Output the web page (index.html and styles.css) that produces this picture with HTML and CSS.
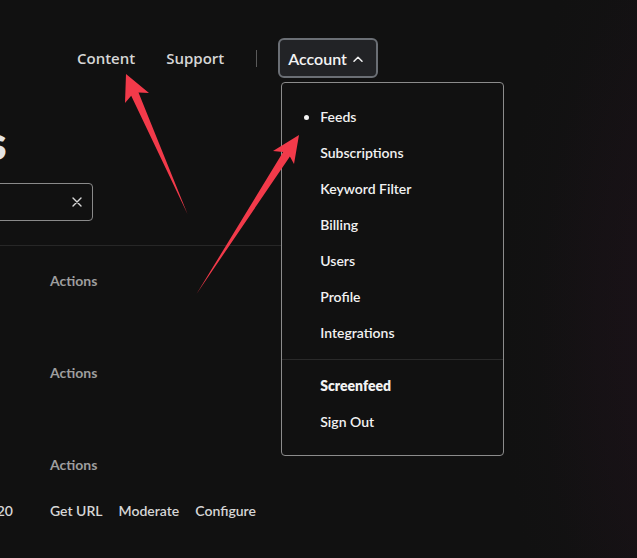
FILE: index.html
```html
<!DOCTYPE html>
<html lang="en">
<head>
<meta charset="utf-8">
<title>Feeds</title>
<link rel="stylesheet" href="styles.css">
</head>
<body>
<div class="screen">
  <header class="topbar">
    <a class="nav-link nav-content">Content</a>
    <a class="nav-link nav-support">Support</a>
    <span class="nav-divider"></span>
    <div class="account">
      <button class="account-btn">Account
        <svg class="chev" viewBox="0 0 10 6" width="10" height="6"><path d="M1 5.2 L5 1.2 L9 5.2" fill="none" stroke="#f2f2f2" stroke-width="1.5" stroke-linecap="round" stroke-linejoin="round"/></svg>
      </button>
      <nav class="menu">
        <ul class="menu-group">
          <li class="menu-item active">Feeds</li>
          <li class="menu-item">Subscriptions</li>
          <li class="menu-item">Keyword Filter</li>
          <li class="menu-item">Billing</li>
          <li class="menu-item">Users</li>
          <li class="menu-item">Profile</li>
          <li class="menu-item">Integrations</li>
        </ul>
        <ul class="menu-group second">
          <li class="menu-item strong">Screenfeed</li>
          <li class="menu-item">Sign Out</li>
        </ul>
      </nav>
    </div>
  </header>

  <main class="main">
    <h1 class="title">Feeds</h1>
    <div class="search">
      <span class="search-input"></span>
      <svg class="clear" viewBox="0 0 10 10" width="10" height="10"><path d="M1 1 L9 9 M9 1 L1 9" fill="none" stroke="#d8d8d8" stroke-width="1.4" stroke-linecap="round"/></svg>
    </div>
    <div class="rule"></div>
    <div class="rows">
      <div class="row"><span class="cell-name"></span><span class="label">Actions</span></div>
      <div class="row"><span class="cell-name"></span><span class="label"></span></div>
      <div class="row"><span class="cell-name"></span><span class="label">Actions</span></div>
      <div class="row"><span class="cell-name"></span><span class="label"></span></div>
      <div class="row"><span class="cell-name"></span><span class="label">Actions</span></div>
      <div class="row"><span class="cell-name">Jan 2020</span>
        <span class="actions"><a>Get URL</a><a>Moderate</a><a>Configure</a></span>
      </div>
    </div>
  </main>

  <svg class="annot" viewBox="0 0 637 558" width="637" height="558">
    <polygon points="126,74 149,93 138.5,92.6 187.5,214 131.2,95.8 125,103" fill="#f23a4a"/>
    <polygon points="299,135 273,151 283.1,152.1 196.5,294 289.9,156.5 294,164" fill="#f23a4a"/>
  </svg>
</div>
</body>
</html>
```

FILE: styles.css
```css
* { box-sizing: border-box; }
html, body { margin: 0; padding: 0; }
body {
  background: #111111;
  font-family: "Lato", "Liberation Sans", sans-serif;
  color: #f0f0f0;
}
.screen {
  position: relative;
  width: 637px;
  height: 558px;
  overflow: hidden;
  background:
    radial-gradient(ellipse 180px 420px at 720px 330px, rgba(36, 18, 30, 0.55), rgba(17,17,17,0) 100%),
    radial-gradient(ellipse 260px 520px at 760px 330px, rgba(30, 20, 28, 0.5), rgba(17,17,17,0) 100%),
    #111111;
}
.topbar {
  display: flex;
  align-items: center;
  height: 40px;
  margin-top: 38px;
  padding-left: 77px;
}
.nav-link {
  font-family: "Open Sans", "Liberation Sans", sans-serif;
  font-size: 15px;
  font-weight: 600;
  color: #d6d6d6;
}
.nav-support { margin-left: 31px; }
.nav-divider {
  width: 1px;
  height: 17px;
  background: #5a5a5a;
  margin-left: 32px;
}
.account {
  position: relative;
  margin-left: 21px;
}
.account-btn {
  display: flex;
  align-items: center;
  gap: 6px;
  height: 40px;
  padding: 0 13px 0 8px;
  background: #222326;
  border: 2px solid #6b6f75;
  border-radius: 6px;
  color: #f4f4f4;
  font-family: "Lato", "Liberation Sans", sans-serif;
  font-size: 16px;
  font-weight: 600;
}
.chev { margin-top: 1px; }
.menu {
  position: absolute;
  top: 44px;
  left: 3px;
  width: 223px;
  height: 374px;
  background: #111111;
  border: 1px solid #8c8c8c;
  border-radius: 4px;
  z-index: 2;
}
.menu-group {
  list-style: none;
  margin: 0;
  padding: 16px 0 8px 38px;
}
.menu-group.second {
  border-top: 1px solid #2a2a2a;
  padding-top: 8px;
}
.menu-item {
  position: relative;
  height: 36px;
  line-height: 36px;
  font-size: 14px;
  font-weight: 600;
  color: #f2f2f2;
}
.menu-item.strong { font-weight: 800; }
.menu-item.active::before {
  content: "";
  position: absolute;
  left: -16px;
  top: 15.5px;
  width: 5px;
  height: 5px;
  border-radius: 50%;
  background: #f4f4f4;
}
.main {
  margin-left: -119px;
  width: 500px;
  margin-top: 36px;
}
.title {
  margin: 0;
  font-size: 48px;
  font-weight: 800;
  line-height: 56px;
  color: #e4e4e4;
  height: 56px;
}
.search {
  display: flex;
  align-items: center;
  justify-content: flex-end;
  width: 212px;
  height: 38px;
  margin-top: 13px;
  border: 1px solid #8a8a8a;
  border-radius: 4px;
  padding-right: 10px;
}
.search-input { flex: 1; }
.rule {
  height: 1px;
  background: #272727;
  margin-top: 24px;
}
.rows { margin-top: 11px; }
.row {
  display: grid;
  grid-template-columns: 169px 1fr;
  align-items: center;
  height: 46px;
}
.cell-name {
  text-align: right;
  padding-right: 37px;
  font-size: 14px;
  font-weight: 600;
  color: #d6d6d6;
}
.label {
  font-size: 14px;
  font-weight: 700;
  color: #9e9e9e;
}
.actions {
  display: flex;
  gap: 16px;
  font-size: 14px;
  font-weight: 600;
  color: #d6d6d6;
}
.annot {
  position: absolute;
  left: 0;
  top: 0;
  z-index: 5;
  pointer-events: none;
}
```
